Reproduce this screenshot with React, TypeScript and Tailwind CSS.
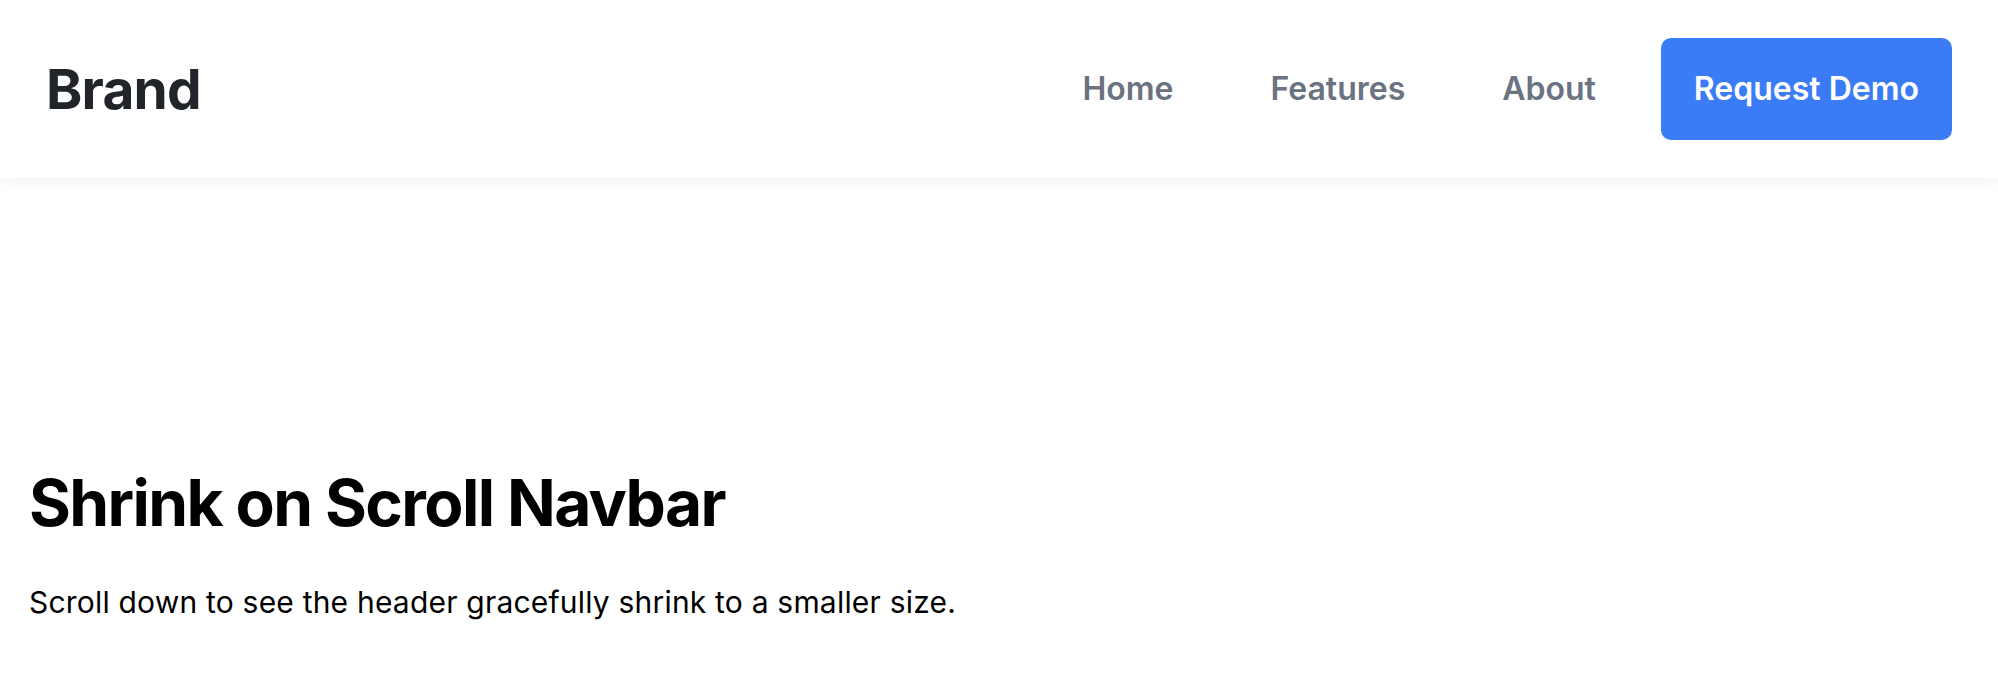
import React from "react";

const links = ["Home", "Features", "About"];

export default function App() {
  return (
    <div className="min-h-screen bg-white" style={{ fontFamily: "Inter, 'Noto Sans', sans-serif" }}>
      <header className="sticky top-0 z-10 flex h-[178px] items-center justify-between bg-white px-[46px] shadow-[0_4px_14px_rgba(0,0,0,0.05)]">
        <div className="text-[55px] font-bold leading-none tracking-[-0.8px] text-[#212529]">Brand</div>
        <nav className="flex items-center">
          <div className="flex items-center gap-[97px]">
            {links.map((l) => (
              <a key={l} href="#" className="text-[32px] font-semibold leading-none text-[#6b7280]">
                {l}
              </a>
            ))}
          </div>
          <button className="ml-[65px] flex h-[102px] items-center rounded-[10px] bg-[#3b7cf6] px-[33px] text-[32px] font-semibold leading-none text-white">
            Request Demo
          </button>
        </nav>
      </header>
      <main className="px-[29px] pt-[286px]">
        <h1 className="text-[64px] font-bold leading-[77px] tracking-[-1.6px] text-black">Shrink on Scroll Navbar</h1>
        <p className="mt-[43px] text-[30px] leading-[36px] tracking-[0.2px] text-black">
          Scroll down to see the header gracefully shrink to a smaller size.
        </p>
      </main>
    </div>
  );
}
